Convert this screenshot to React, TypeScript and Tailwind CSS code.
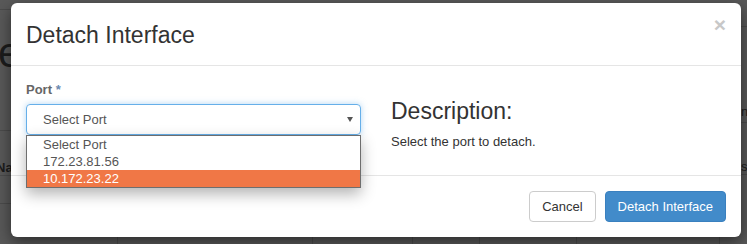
import React from "react";

const CaretDown = () => (
  <svg width="6" height="5" viewBox="0 0 6 5" className="shrink-0">
    <polygon points="0,0 6,0 3,5" fill="#555" />
  </svg>
);

const ports = ["Select Port", "172.23.81.56", "10.172.23.22"];

// page behind the backdrop: only the strips outside the modal show
const Backdrop = () => (
  <div className="flex h-full flex-col">
    <div className="flex flex-1 justify-between">
      <div className="flex w-[11px] flex-col">
        <div className="h-[10px] border-b border-[#4b4b4b]" />
        <div className="h-[121px] border-b border-[#4b4b4b]">
          <div className="ml-[-2px] mt-[22px] text-[42px] leading-[42px] text-[#1c1c1c]">e</div>
        </div>
        <div className="h-[45px] border-b border-[#4b4b4b] pt-[29px]">
          <div className="ml-[-4px] whitespace-nowrap text-[13px] font-bold leading-[16px] text-[#1c1c1c]">Name</div>
        </div>
        <div className="h-[28px] border-b border-[#4b4b4b]" />
      </div>
      <div className="flex w-[6px] flex-col">
        <div className="h-[27px] border-b border-[#4b4b4b]" />
        <div className="h-[96px] border-b border-[#4b4b4b] pt-[77px]">
          <div className="text-[13px] leading-[16px] text-[#1c1c1c]">n</div>
        </div>
        <div className="h-[52px] border-b border-[#4b4b4b] pt-[36px]">
          <div className="text-[13px] leading-[16px] text-[#1c1c1c]">s</div>
        </div>
      </div>
    </div>
    <div className="flex h-[7px]">
      <div className="w-[117px]" />
      <div className="w-[195px] border-l border-[#4b4b4b]" />
      <div className="w-[100px] border-l border-[#4b4b4b]" />
      <div className="w-[67px] border-l border-[#4b4b4b]" />
      <div className="w-[97px] border-l border-[#4b4b4b]" />
      <div className="w-[143px] border-l border-[#4b4b4b]" />
      <div className="flex-1 border-l border-[#4b4b4b]" />
    </div>
  </div>
);

export default function App() {
  return (
    <div className="relative h-[244px] w-[747px] overflow-hidden bg-[#595959] font-['Liberation_Sans',Arial,sans-serif]">
      <Backdrop />

      <div className="absolute left-[11px] top-[3px] flex h-[234px] w-[730px] flex-col rounded-[6px] bg-white shadow-[0_5px_15px_rgba(0,0,0,0.5)]">
        {/* Header */}
        <div className="flex h-[63px] items-start justify-between border-b border-[#e5e5e5] px-[15px]">
          <h4 className="mt-[18px] text-[23px] leading-[28px] text-[#333]">Detach Interface</h4>
          <button className="mt-[11px] text-[21px] font-bold leading-[21px] text-[#c8c8c8]">×</button>
        </div>

        {/* Body */}
        <div className="grid h-[109px] grid-cols-2 gap-x-[30px] px-[15px] pt-[15px]">
          <div>
            <label className="block text-[13px] font-bold leading-[18px] text-[#666]">
              Port <span className="text-[#6a8ab0]">*</span>
            </label>
            <div className="relative mt-[5px]">
              <div className="flex h-[31px] items-center justify-between rounded-[4px] border border-[#66afe9] pl-[16px] pr-[7px] text-[13px] text-[#555] shadow-[0_0_6px_rgba(102,175,233,0.5)]">
                <span>Select Port</span>
                <CaretDown />
              </div>
              {/* open option list */}
              <ul className="absolute left-0 right-0 top-full z-10 border border-[#6e6e6e] bg-white shadow-[0_6px_14px_rgba(0,0,0,0.3)]">
                {ports.map((p, i) => (
                  <li
                    key={p}
                    className={
                      i === 2
                        ? "h-[17px] bg-[#f07746] pl-[16px] text-[13px] leading-[17px] text-white"
                        : "h-[17px] pl-[16px] text-[13px] leading-[17px] text-[#555]"
                    }
                  >
                    {p}
                  </li>
                ))}
              </ul>
            </div>
          </div>
          <div>
            <h3 className="mt-[18px] text-[23px] leading-[25px] text-[#333]">Description:</h3>
            <p className="mt-[9px] text-[13px] leading-[18px] text-[#333]">Select the port to detach.</p>
          </div>
        </div>

        {/* Footer */}
        <div className="flex h-[62px] items-center justify-end gap-[9px] border-t border-[#e5e5e5] px-[15px]">
          <button className="h-[31px] rounded-[4px] border border-[#ccc] bg-white px-[12px] text-[13px] text-[#333]">
            Cancel
          </button>
          <button className="h-[31px] rounded-[4px] border border-[#3a80bf] bg-[#428bca] px-[12px] text-[13px] text-white">
            Detach Interface
          </button>
        </div>
      </div>
    </div>
  );
}
